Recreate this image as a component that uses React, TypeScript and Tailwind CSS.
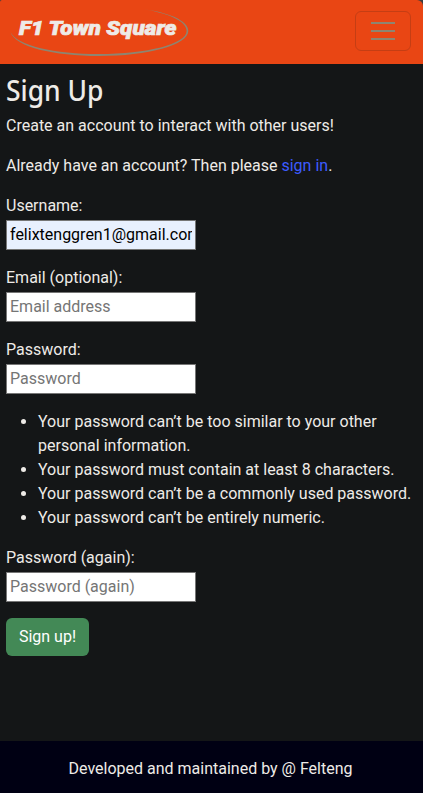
import React from 'react';

type FieldProps = {
  id: string;
  label: string;
  placeholder?: string;
  value?: string;
  type?: string;
};

function Field({ id, label, placeholder, value, type = 'text' }: FieldProps) {
  return (
    <div className="mb-4 flex flex-col items-start">
      <label htmlFor={id} className="mb-0.5 h-6">{label}</label>
      <input
        id={id}
        type={type}
        placeholder={placeholder}
        defaultValue={value}
        className={`h-[30px] w-[190px] border border-[#767676] px-[3px] pb-0.5 text-black placeholder:text-[#757575] ${value ? 'bg-[#e8f0fe]' : 'bg-white'}`}
      />
    </div>
  );
}

function Logo() {
  return (
    <svg width="190" height="64" viewBox="0 0 190 64" role="img" aria-label="F1 Town Square">
      <path
        d="M140 8.800C168 12 188.300 20.500 188.300 31C188.300 45 148 56 99 56C54 56 15 47 10.500 32C17 46 55 54 99 54C147 54 186.600 44 186.600 31C186.600 21 167 12.500 140 8.800Z"
        fill="#8d8571"
      />
      <text
        x="19"
        y="35"
        textLength="157.500"
        lengthAdjust="spacingAndGlyphs"
        fill="#eeebe7"
        className="font-['Roboto',sans-serif] text-[20px] font-black italic"
        stroke="#eeebe7"
        strokeWidth="0.7"
      >
        F1 Town Square
      </text>
    </svg>
  );
}

export default function App() {
  return (
    <div className="flex min-h-[793px] flex-col bg-[#141617] font-['Roboto',sans-serif] text-base leading-6 text-[#eeebe7]">
      <div className="bg-[#3a3d40]">
        <nav className="flex h-16 items-center justify-between rounded-tl-[2px] rounded-tr-[6px] bg-[#e94614] pr-3">
          <Logo />
          <button aria-label="Toggle navigation" className="mb-0.5 flex h-10 w-14 flex-col items-center justify-center gap-1.5 rounded-md border border-[#c53e14]">
            <span className="h-0.5 w-6 bg-[#8d8571]" />
            <span className="h-0.5 w-6 bg-[#8d8571]" />
            <span className="h-0.5 w-6 bg-[#8d8571]" />
          </button>
        </nav>
      </div>
      <main className="flex-1 px-1.5 pt-[9px]">
        <h1 className="mb-[7px] origin-left scale-x-[0.935] font-['Noto_Sans',sans-serif] text-[28.3px] leading-[34px] font-medium">Sign Up</h1>
        <p className="mb-4">Create an account to interact with other users!</p>
        <p className="mb-4">
          Already have an account? Then please <a href="#" className="text-[#3d5cff]">sign in</a>.
        </p>
        <form>
          <Field id="username" label="Username:" value="felixtenggren1@gmail.com" />
          <Field id="email" label="Email (optional):" placeholder="Email address" />
          <Field id="password" label="Password:" placeholder="Password" type="password" />
          <ul className="mb-4 list-disc pl-8">
            <li>Your password can’t be too similar to your other personal information.</li>
            <li>Your password must contain at least 8 characters.</li>
            <li>Your password can’t be a commonly used password.</li>
            <li>Your password can’t be entirely numeric.</li>
          </ul>
          <Field id="password-again" label="Password (again):" placeholder="Password (again)" type="password" />
          <button type="button" className="h-[38px] w-[83px] rounded-md bg-[#438956] text-white">Sign up!</button>
        </form>
      </main>
      <footer className="flex h-[52px] items-center justify-center bg-[#000013] pt-1 pr-0.5">
        Developed and maintained by @ Felteng
      </footer>
    </div>
  );
}
